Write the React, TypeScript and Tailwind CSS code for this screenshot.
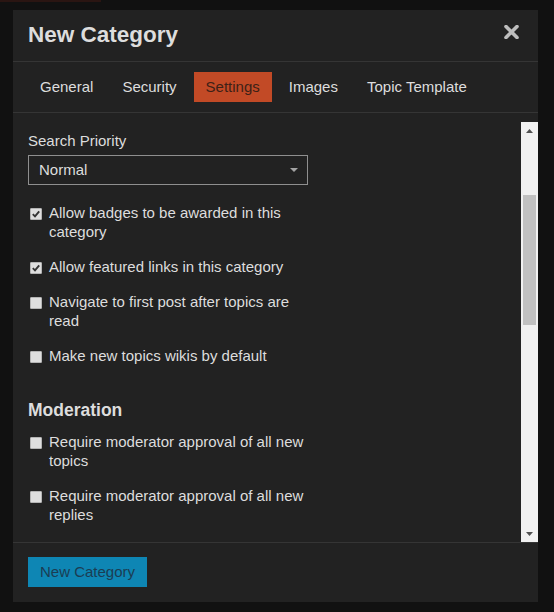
import { useState } from "react";

const tabs = ["General", "Security", "Settings", "Images", "Topic Template"];

const settingsItems = [
  { label: "Allow badges to be awarded in this category", checked: true },
  { label: "Allow featured links in this category", checked: true },
  { label: "Navigate to first post after topics are read", checked: false },
  { label: "Make new topics wikis by default", checked: false },
];

const moderationItems = [
  { label: "Require moderator approval of all new topics", checked: false },
  { label: "Require moderator approval of all new replies", checked: false },
];

function CheckItem({ label, checked }: { label: string; checked: boolean }) {
  const [on, setOn] = useState(checked);
  return (
    <label className="flex items-start w-[280px] cursor-pointer" onClick={() => setOn(!on)}>
      <span className="mt-[5px] ml-[2px] mr-[7px] flex h-[12px] w-[12px] shrink-0 items-center justify-center rounded-[1px] border border-[#b4b4b4] bg-[#dedede]">
        {on && (
          <svg width="10" height="10" viewBox="0 0 10 10">
            <path d="M1.8 5.2 L4 7.4 L8.2 2.4" fill="none" stroke="#333" strokeWidth="1.9" />
          </svg>
        )}
      </span>
      <span className="leading-[19px]">{label}</span>
    </label>
  );
}

export default function App() {
  const [active, setActive] = useState("Settings");

  return (
    <div
      className="h-screen w-full overflow-hidden bg-[#111111] text-[15px] text-[#dddddd]"
      style={{ fontFamily: '"Liberation Sans", Arial, sans-serif' }}
    >
      <div className="h-[2px] w-[101px] bg-[#2a1512]" />
      <div className="ml-[13px] mt-[8px] flex h-[592px] w-[525px] flex-col bg-[#222222]">
        {/* header */}
        <div className="flex h-[51px] items-start justify-between pl-[15px] pr-[19px] pt-[12px]">
          <h1 className="text-[22.5px] font-bold leading-[26px] text-[#dddddd]">New Category</h1>
          <button className="mt-[3px]" aria-label="close">
            <svg width="15" height="14" viewBox="0 0 15 14">
              <path d="M2 1.5 L13 12.5 M13 1.5 L2 12.5" stroke="#bdbdbd" strokeWidth="3.6" strokeLinecap="round" />
            </svg>
          </button>
        </div>
        <div className="h-px bg-[#353535]" />

        {/* tabs */}
        <div className="flex h-[50px] gap-[5px] pl-[15px] pt-[10px]">
          {tabs.map((t) => (
            <button
              key={t}
              onClick={() => setActive(t)}
              className={
                t === active
                  ? "h-[30px] bg-[#c24a26] px-[12px] leading-[30px] text-[#3d2117]"
                  : "h-[30px] px-[12px] leading-[30px] text-[#dddddd]"
              }
            >
              {t}
            </button>
          ))}
        </div>
        <div className="h-px bg-[#353535]" />

        {/* body */}
        <div className="flex h-[429px]">
          <div className="flex-1 overflow-hidden pl-[15px] pt-[18px]">
            <div className="leading-[19px]">Search Priority</div>
            <div className="mt-[5px] flex h-[30px] w-[280px] items-center justify-between border border-[#8f8f8f] pl-[10px] pr-[9px]">
              <span>Normal</span>
              <svg width="8" height="4" viewBox="0 0 8 4">
                <path d="M0 0 H8 L4 4 Z" fill="#a3a3a3" />
              </svg>
            </div>

            <div className="mt-[18px] flex flex-col gap-[16px]">
              {settingsItems.map((it) => (
                <CheckItem key={it.label} label={it.label} checked={it.checked} />
              ))}
            </div>

            <h2 className="mt-[33px] text-[17.5px] font-bold leading-[24px]">Moderation</h2>
            <div className="mt-[10px] flex flex-col gap-[16px]">
              {moderationItems.map((it) => (
                <CheckItem key={it.label} label={it.label} checked={it.checked} />
              ))}
            </div>
          </div>

          {/* scrollbar */}
          <div className="mt-[9px] flex w-[17px] flex-col bg-[#f1f1f1]">
            <div className="flex h-[17px] items-center justify-center">
              <svg width="7" height="4" viewBox="0 0 7 4">
                <path d="M0 4 H7 L3.5 0 Z" fill="#505050" />
              </svg>
            </div>
            <div className="mx-[2px] mt-[56px] h-[130px] bg-[#c1c1c1]" />
            <div className="flex-1" />
            <div className="flex h-[17px] items-center justify-center">
              <svg width="7" height="4" viewBox="0 0 7 4">
                <path d="M0 0 H7 L3.5 4 Z" fill="#505050" />
              </svg>
            </div>
          </div>
        </div>
        <div className="h-px bg-[#353535]" />

        {/* footer */}
        <div className="pl-[15px] pt-[14px]">
          <button className="h-[30px] bg-[#0e86b4] px-[12px] leading-[30px] text-[#1b3d53]">New Category</button>
        </div>
      </div>
    </div>
  );
}
